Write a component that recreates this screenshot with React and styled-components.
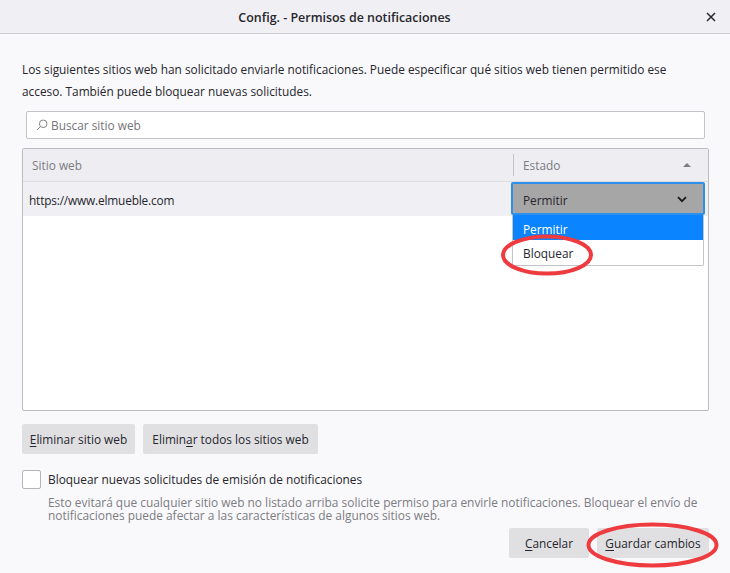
import styled, { createGlobalStyle } from "styled-components";

const Global = createGlobalStyle`
  html, body { margin: 0; padding: 0; background: #f9f9fb; }
  * { box-sizing: border-box; }
`;

const Dialog = styled.div`
  width: 730px;
  height: 573px;
  display: flex;
  flex-direction: column;
  background: #f9f9fb;
  color: #26262c;
  font-family: "Open Sans", "Noto Sans", sans-serif;
  font-size: 11.85px;
  overflow: hidden;
`;

const TitleBar = styled.div`
  height: 34px;
  flex: none;
  position: relative;
  display: flex;
  align-items: center;
  justify-content: center;
  background: #f0f0f4;
  border-bottom: 1px solid #cfcfd3;
  font-weight: 600;
  font-size: 12.45px;
  padding: 2px 41px 0 0;
`;

const Close = styled.svg`
  position: absolute;
  right: 14px;
  top: 12px;
  width: 10px;
  height: 10px;
`;

const Body = styled.div`
  flex: 1;
  display: flex;
  flex-direction: column;
  padding: 24px 21px 0 22px;
`;

const Intro = styled.p`
  margin: 0;
  line-height: 22px;
  width: 680px;
`;

const Search = styled.div`
  height: 28px;
  margin: 9px 4px 0 4px;
  display: flex;
  align-items: center;
  gap: 3px;
  padding-left: 9px;
  background: #fff;
  border: 1px solid #c4c4c8;
  border-radius: 2px;
  color: #75757a;
`;

const Table = styled.div`
  position: relative;
  height: 263px;
  margin-top: 9px;
  background: #fff;
  border: 1px solid #bcbcc0;
  border-radius: 2px;
`;

const HeaderRow = styled.div`
  height: 33px;
  display: flex;
  align-items: center;
  background: #ededf2;
  border-bottom: 1px solid #dcdce0;
  color: #7c7c82;
  padding: 0 16px 0 9px;
`;

const HeaderCell = styled.span`
  flex: ${(p) => (p.$grow ? 1 : "none")};
  display: flex;
  align-items: center;
  height: 22px;
`;

const StateCell = styled(HeaderCell)`
  width: 179px;
  flex: none;
  padding-left: 9px;
  border-left: 1px solid #c4c4c8;
  justify-content: space-between;
`;

const SortArrow = styled.i`
  width: 0;
  height: 0;
  margin-right: 1px;
  border-left: 4px solid transparent;
  border-right: 4px solid transparent;
  border-bottom: 4px solid #7c7c82;
`;

const Row = styled.div`
  height: 34px;
  display: flex;
  align-items: center;
  padding: 1px 0 0 6px;
  background: #f0f0f4;
  letter-spacing: -0.17px;
`;

const SelectBox = styled.div`
  position: absolute;
  left: 488px;
  top: 33px;
  width: 194px;
  height: 33px;
  display: flex;
  align-items: center;
  justify-content: space-between;
  padding: 2px 16px 0 10px;
  background: #a6a6a6;
  border: 2px solid #2f8fec;
  border-radius: 2px;
`;

const Menu = styled.div`
  position: absolute;
  left: 489px;
  top: 66px;
  width: 192px;
  height: 51px;
  background: #fff;
  border: 1px solid #c4c4c8;
  border-top: 0;
  border-radius: 0 0 2px 2px;
`;

const Option = styled.div`
  height: 25px;
  line-height: ${(p) => (p.$active ? 28 : 27)}px;
  padding-left: 10px;
  background: ${(p) => (p.$active ? "#0a84ff" : "transparent")};
  color: ${(p) => (p.$active ? "#fff" : "#26262c")};
`;

const Actions = styled.div`
  display: flex;
  gap: 8px;
  margin-top: 13px;
`;

const Button = styled.div`
  height: 30px;
  width: ${(p) => p.$w}px;
  display: flex;
  align-items: center;
  justify-content: center;
  white-space: pre;
  background: #e0e0e3;
  border-radius: 2px;
  u { text-underline-offset: 2px; }
`;

const CheckRow = styled.div`
  display: flex;
  align-items: center;
  gap: 7px;
  margin-top: 15px;
  line-height: 21px;
`;

const CheckBox = styled.span`
  width: 19px;
  height: 19px;
  background: #fff;
  border: 1px solid #b4b4b8;
  border-radius: 2px;
`;

const Hint = styled.p`
  margin: 6px 0 0 26px;
  font-size: 11.91px;
  line-height: 13px;
  color: #7c7c82;
  width: 670px;
`;

const Footer = styled.div`
  display: flex;
  justify-content: flex-end;
  gap: 8px;
  margin-top: 6px;
`;

// red marker rings painted over the screenshot
const Ring = styled.svg`
  position: absolute;
  left: 0;
  top: 0;
  pointer-events: none;
`;

export default function App() {
  return (
    <>
      <Global />
      <Dialog>
        <TitleBar>
          Config. - Permisos de notificaciones
          <Close viewBox="0 0 10 10">
            <path d="M1 1l8 8M9 1l-8 8" stroke="#26262c" strokeWidth="1.5" fill="none" />
          </Close>
        </TitleBar>
        <Body>
          <Intro>
            Los siguientes sitios web han solicitado enviarle notificaciones. Puede especificar qué sitios web tienen permitido ese acceso. También puede bloquear nuevas solicitudes.
          </Intro>
          <Search>
            <svg width="12" height="12" viewBox="0 0 12 12">
              <circle cx="7.2" cy="4.8" r="3.8" stroke="#85858a" fill="none" />
              <path d="M4.4 7.6L1 11" stroke="#85858a" fill="none" />
            </svg>
            Buscar sitio web
          </Search>
          <Table>
            <HeaderRow>
              <HeaderCell $grow>Sitio web</HeaderCell>
              <StateCell>
                Estado
                <SortArrow />
              </StateCell>
            </HeaderRow>
            <Row>https://www.elmueble.com</Row>
            <SelectBox>
              Permitir
              <svg width="10" height="7" viewBox="0 0 10 7">
                <path d="M1 1.2l4 4 4-4" stroke="#1a1a1e" strokeWidth="1.8" fill="none" />
              </svg>
            </SelectBox>
            <Menu>
              <Option $active>Permitir</Option>
              <Option>Bloquear</Option>
            </Menu>
          </Table>
          <Actions>
            <Button $w={113}><span><u>E</u>liminar sitio web</span></Button>
            <Button $w={175}><span>Elimin<u>a</u>r todos los sitios web</span></Button>
          </Actions>
          <CheckRow>
            <CheckBox />
            <span>Bloquear nuevas solicitudes de emisión de notificaciones</span>
          </CheckRow>
          <Hint>
            Esto evitará que cualquier sitio web no listado arriba solicite permiso para envirle notificaciones. Bloquear el envío de notificaciones puede afectar a las características de algunos sitios web.
          </Hint>
          <Footer>
            <Button $w={80}><span><u>C</u>ancelar</span></Button>
            <Button $w={112}><span><u>G</u>uardar cambios</span></Button>
          </Footer>
        </Body>
        <Ring width="730" height="573">
          <ellipse cx="547" cy="255" rx="44" ry="18.5" fill="none" stroke="#ee3b3f" strokeWidth="4" />
          <ellipse cx="652.5" cy="545" rx="64" ry="20.5" fill="none" stroke="#ee3b3f" strokeWidth="4" />
        </Ring>
      </Dialog>
    </>
  );
}
